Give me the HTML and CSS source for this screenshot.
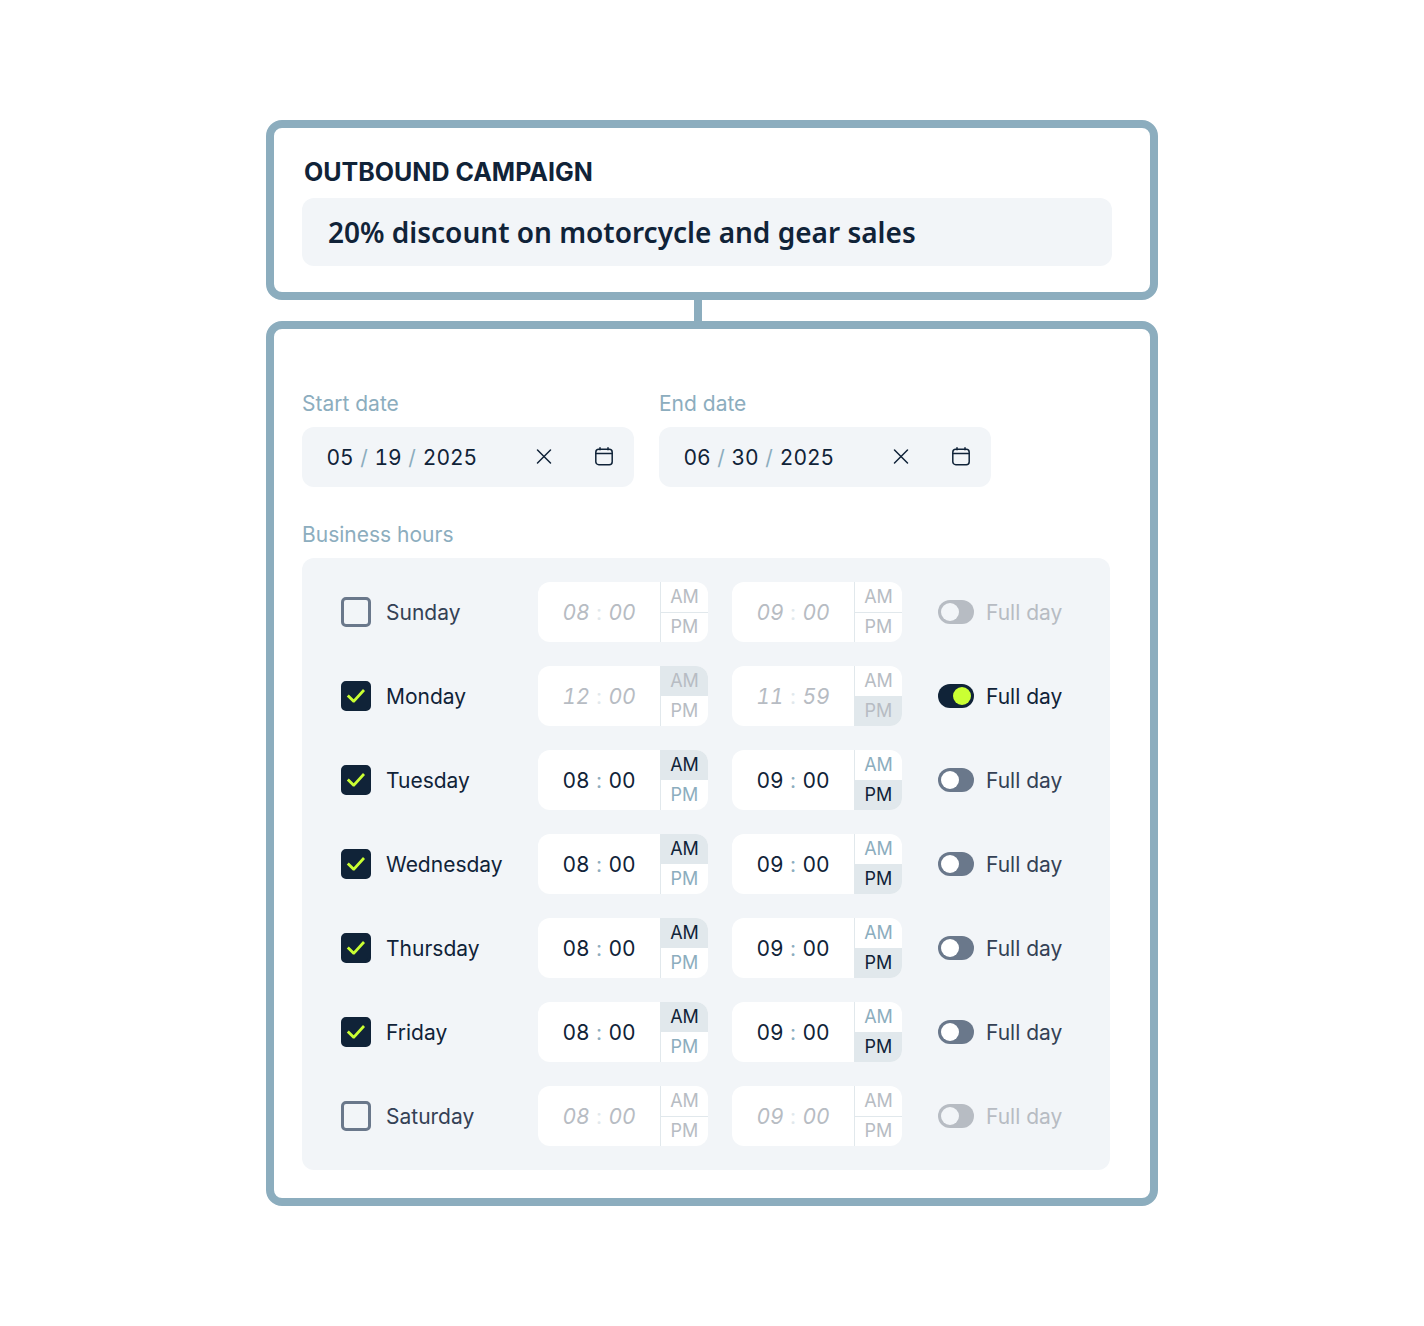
FILE: index.html
```html
<!DOCTYPE html>
<html lang="en">
<head>
    <meta charset="UTF-8">
    <meta name="viewport" content="width=device-width, initial-scale=1.0">
    <title>Outbound campaign</title>
    <link rel="stylesheet" href="styles.css">
</head>
<body>
    <main class="campaign">
        <section class="card card-title">
            <h1><label for="campaign-name">OUTBOUND CAMPAIGN</label></h1>
            <input type="text" id="campaign-name" class="name-input" value="20% discount on motorcycle and gear sales">
        </section>

        <div class="connector"></div>

        <section class="card card-schedule">
            <div class="dates">
                <div class="field">
                    <label for="start-month">Start date</label>
                    <div class="date-box">
                        <input type="text" id="start-month" class="num" value="05">
                        <span class="slash">/</span>
                        <input type="text" class="num" value="19" aria-label="Start day">
                        <span class="slash">/</span>
                        <input type="text" class="num year" value="2025" aria-label="Start year">
                        <button type="button" class="icon-button clear" aria-label="Clear start date">
                            <svg width="20" height="20" viewBox="0 0 20 20"><path d="M3.5 3l13 13M16.5 3l-13 13"/></svg>
                        </button>
                        <button type="button" class="icon-button" aria-label="Open start calendar">
                            <svg width="20" height="20" viewBox="0 0 20 20"><rect x="1.8" y="2.3" width="16.4" height="15.4" rx="3"/><path d="M2 6.5h16M6 .8v2M14 .8v2"/></svg>
                        </button>
                    </div>
                </div>
                <div class="field">
                    <label for="end-month">End date</label>
                    <div class="date-box">
                        <input type="text" id="end-month" class="num" value="06">
                        <span class="slash">/</span>
                        <input type="text" class="num" value="30" aria-label="End day">
                        <span class="slash">/</span>
                        <input type="text" class="num year" value="2025" aria-label="End year">
                        <button type="button" class="icon-button clear" aria-label="Clear end date">
                            <svg width="20" height="20" viewBox="0 0 20 20"><path d="M3.5 3l13 13M16.5 3l-13 13"/></svg>
                        </button>
                        <button type="button" class="icon-button" aria-label="Open end calendar">
                            <svg width="20" height="20" viewBox="0 0 20 20"><rect x="1.8" y="2.3" width="16.4" height="15.4" rx="3"/><path d="M2 6.5h16M6 .8v2M14 .8v2"/></svg>
                        </button>
                    </div>
                </div>
            </div>

            <h2>Business hours</h2>
            <div class="hours">
                <div class="row off">
                    <label class="day"><input type="checkbox" class="check">Sunday</label>
                    <div class="time">
                        <input type="text" class="num" value="08" aria-label="Sunday from, hours" disabled>
                        <span class="colon">:</span>
                        <input type="text" class="num" value="00" aria-label="Sunday from, minutes" disabled>
                        <div class="ampm"><button type="button" disabled>AM</button><button type="button" disabled>PM</button></div>
                    </div>
                    <div class="time">
                        <input type="text" class="num" value="09" aria-label="Sunday to, hours" disabled>
                        <span class="colon">:</span>
                        <input type="text" class="num" value="00" aria-label="Sunday to, minutes" disabled>
                        <div class="ampm"><button type="button" disabled>AM</button><button type="button" disabled>PM</button></div>
                    </div>
                    <label class="full-day"><input type="checkbox" class="toggle" disabled>Full day</label>
                </div>

                <div class="row full">
                    <label class="day"><input type="checkbox" class="check" checked>Monday</label>
                    <div class="time">
                        <input type="text" class="num" value="12" aria-label="Monday from, hours" disabled>
                        <span class="colon">:</span>
                        <input type="text" class="num" value="00" aria-label="Monday from, minutes" disabled>
                        <div class="ampm"><button type="button" class="active" disabled>AM</button><button type="button" disabled>PM</button></div>
                    </div>
                    <div class="time">
                        <input type="text" class="num" value="11" aria-label="Monday to, hours" disabled>
                        <span class="colon">:</span>
                        <input type="text" class="num" value="59" aria-label="Monday to, minutes" disabled>
                        <div class="ampm"><button type="button" disabled>AM</button><button type="button" class="active" disabled>PM</button></div>
                    </div>
                    <label class="full-day"><input type="checkbox" class="toggle" checked>Full day</label>
                </div>

                <div class="row">
                    <label class="day"><input type="checkbox" class="check" checked>Tuesday</label>
                    <div class="time">
                        <input type="text" class="num" value="08" aria-label="Tuesday from, hours">
                        <span class="colon">:</span>
                        <input type="text" class="num" value="00" aria-label="Tuesday from, minutes">
                        <div class="ampm"><button type="button" class="active">AM</button><button type="button">PM</button></div>
                    </div>
                    <div class="time">
                        <input type="text" class="num" value="09" aria-label="Tuesday to, hours">
                        <span class="colon">:</span>
                        <input type="text" class="num" value="00" aria-label="Tuesday to, minutes">
                        <div class="ampm"><button type="button">AM</button><button type="button" class="active">PM</button></div>
                    </div>
                    <label class="full-day"><input type="checkbox" class="toggle">Full day</label>
                </div>

                <div class="row">
                    <label class="day"><input type="checkbox" class="check" checked>Wednesday</label>
                    <div class="time">
                        <input type="text" class="num" value="08" aria-label="Wednesday from, hours">
                        <span class="colon">:</span>
                        <input type="text" class="num" value="00" aria-label="Wednesday from, minutes">
                        <div class="ampm"><button type="button" class="active">AM</button><button type="button">PM</button></div>
                    </div>
                    <div class="time">
                        <input type="text" class="num" value="09" aria-label="Wednesday to, hours">
                        <span class="colon">:</span>
                        <input type="text" class="num" value="00" aria-label="Wednesday to, minutes">
                        <div class="ampm"><button type="button">AM</button><button type="button" class="active">PM</button></div>
                    </div>
                    <label class="full-day"><input type="checkbox" class="toggle">Full day</label>
                </div>

                <div class="row">
                    <label class="day"><input type="checkbox" class="check" checked>Thursday</label>
                    <div class="time">
                        <input type="text" class="num" value="08" aria-label="Thursday from, hours">
                        <span class="colon">:</span>
                        <input type="text" class="num" value="00" aria-label="Thursday from, minutes">
                        <div class="ampm"><button type="button" class="active">AM</button><button type="button">PM</button></div>
                    </div>
                    <div class="time">
                        <input type="text" class="num" value="09" aria-label="Thursday to, hours">
                        <span class="colon">:</span>
                        <input type="text" class="num" value="00" aria-label="Thursday to, minutes">
                        <div class="ampm"><button type="button">AM</button><button type="button" class="active">PM</button></div>
                    </div>
                    <label class="full-day"><input type="checkbox" class="toggle">Full day</label>
                </div>

                <div class="row">
                    <label class="day"><input type="checkbox" class="check" checked>Friday</label>
                    <div class="time">
                        <input type="text" class="num" value="08" aria-label="Friday from, hours">
                        <span class="colon">:</span>
                        <input type="text" class="num" value="00" aria-label="Friday from, minutes">
                        <div class="ampm"><button type="button" class="active">AM</button><button type="button">PM</button></div>
                    </div>
                    <div class="time">
                        <input type="text" class="num" value="09" aria-label="Friday to, hours">
                        <span class="colon">:</span>
                        <input type="text" class="num" value="00" aria-label="Friday to, minutes">
                        <div class="ampm"><button type="button">AM</button><button type="button" class="active">PM</button></div>
                    </div>
                    <label class="full-day"><input type="checkbox" class="toggle">Full day</label>
                </div>

                <div class="row off">
                    <label class="day"><input type="checkbox" class="check">Saturday</label>
                    <div class="time">
                        <input type="text" class="num" value="08" aria-label="Saturday from, hours" disabled>
                        <span class="colon">:</span>
                        <input type="text" class="num" value="00" aria-label="Saturday from, minutes" disabled>
                        <div class="ampm"><button type="button" disabled>AM</button><button type="button" disabled>PM</button></div>
                    </div>
                    <div class="time">
                        <input type="text" class="num" value="09" aria-label="Saturday to, hours" disabled>
                        <span class="colon">:</span>
                        <input type="text" class="num" value="00" aria-label="Saturday to, minutes" disabled>
                        <div class="ampm"><button type="button" disabled>AM</button><button type="button" disabled>PM</button></div>
                    </div>
                    <label class="full-day"><input type="checkbox" class="toggle" disabled>Full day</label>
                </div>
            </div>
        </section>
    </main>
</body>
</html>
```
FILE: styles.css
```css
:root {
    --frame: #8cadbe;
    --panel: #f2f5f8;
    --line: #e1e8ec;
    --dark: #102338;
    --muted: #344155;
    --gray: #6a788b;
    --disabled: #b7bcc3;
    --lime: #caff33;
}

* {
    box-sizing: border-box;
}

body {
    margin: 0;
    padding: 120px 20px;
    background: #fff;
    color: var(--dark);
    font-family: Inter, 'Liberation Sans', sans-serif;
    font-size: 21px;
    font-weight: 400;
    line-height: 29px;
}

input,
button {
    font: inherit;
    color: inherit;
    margin: 0;
    padding: 0;
    border: none;
    background: none;
}

.campaign {
    max-width: 892px;
    margin: 0 auto;
}

.card {
    border: 8px solid var(--frame);
    border-radius: 16px;
    background: #fff;
}

.card-title {
    padding: 28px 38px 26px 28px;
}

h1 {
    margin: 0 0 10px;
    padding-left: 2px;
    font-size: 25px;
    font-weight: 700;
    line-height: 32px;
}

.name-input {
    display: block;
    width: 100%;
    height: 68px;
    padding: 0 26px;
    border-radius: 12px;
    background: var(--panel);
    font-family: 'Noto Sans', 'Open Sans', sans-serif;
    font-size: 28px;
    font-weight: 600;
}

.connector {
    width: 8px;
    height: 21px;
    margin-left: 48%;
    background: var(--frame);
}

.card-schedule {
    padding: 61px 40px 28px 28px;
}

.dates {
    display: flex;
    gap: 25px;
    margin-bottom: 34px;
}

.field {
    width: 332px;
}

.field label,
h2 {
    display: block;
    margin: 0 0 9px;
    color: var(--frame);
    font-size: 21px;
    font-weight: 400;
    line-height: 28px;
}

.date-box {
    display: flex;
    align-items: center;
    height: 60px;
    padding: 0 20px 0 24px;
    border-radius: 12px;
    background: var(--panel);
}

.num {
    width: 28px;
    font-variant-numeric: tabular-nums;
    text-align: center;
}

.year {
    width: 56px;
}

.slash,
.colon {
    width: 20px;
    color: var(--frame);
    text-align: center;
}

.colon {
    width: 18px;
}

.icon-button {
    width: 20px;
    height: 20px;
    cursor: pointer;
}

.icon-button svg {
    display: block;
    fill: none;
    stroke: var(--dark);
    stroke-width: 1.5;
    stroke-linecap: round;
}

.clear {
    margin-left: auto;
    margin-right: 40px;
}

.hours {
    display: grid;
    gap: 24px;
    padding: 24px 39px;
    border-radius: 12px;
    background: var(--panel);
}

.row {
    display: grid;
    grid-template-columns: 173px 170px 170px 1fr;
    column-gap: 24px;
    align-items: center;
}

.day,
.full-day {
    display: flex;
    align-items: center;
    gap: 15px;
}

.full-day {
    gap: 12px;
    padding-left: 12px;
    color: var(--muted);
}

.check {
    appearance: none;
    display: grid;
    place-items: center;
    width: 30px;
    height: 30px;
    border: 3px solid var(--gray);
    border-radius: 5px;
}

.check:checked {
    border-color: var(--dark);
    background: var(--dark);
}

.check:checked::before {
    content: "";
    width: 20px;
    height: 20px;
    background: var(--lime);
    clip-path: path("M.8 10.4 L2.8 8.4 L7.7 13.2 L17 3 L19 4.9 L8.5 16.4 L6.9 16.4 Z");
}

.toggle {
    appearance: none;
    display: flex;
    width: 36px;
    height: 24px;
    padding: 3px;
    border-radius: 12px;
    background: var(--gray);
}

.toggle::before {
    content: "";
    width: 18px;
    height: 18px;
    border-radius: 50%;
    background: #fff;
}

.toggle:checked {
    justify-content: flex-end;
    background: var(--dark);
}

.toggle:checked::before {
    background: var(--lime);
}

.time {
    display: flex;
    align-items: center;
    height: 60px;
    padding-left: 24px;
    border-radius: 12px;
    background: #fff;
    overflow: hidden;
}

.ampm {
    display: flex;
    flex-direction: column;
    width: 48px;
    height: 60px;
    margin-left: auto;
    border-left: 1px solid var(--line);
}

.ampm button {
    flex: 1;
    color: var(--frame);
    font-size: 18px;
    line-height: 24px;
}

.ampm .active {
    background: var(--line);
    color: var(--dark);
}

.off .day {
    color: var(--muted);
}

.off .full-day,
.off .num,
.full .num,
.off .ampm button,
.full .ampm button {
    color: var(--disabled);
}

.off .num,
.full .num {
    font-style: italic;
}

.off .colon,
.full .colon {
    color: var(--line);
}

.off .ampm button:first-child {
    border-bottom: 1px solid var(--line);
}

.full .full-day {
    color: var(--dark);
}

.toggle:disabled {
    background: var(--disabled);
}

.toggle:disabled::before {
    background: var(--panel);
}
```
